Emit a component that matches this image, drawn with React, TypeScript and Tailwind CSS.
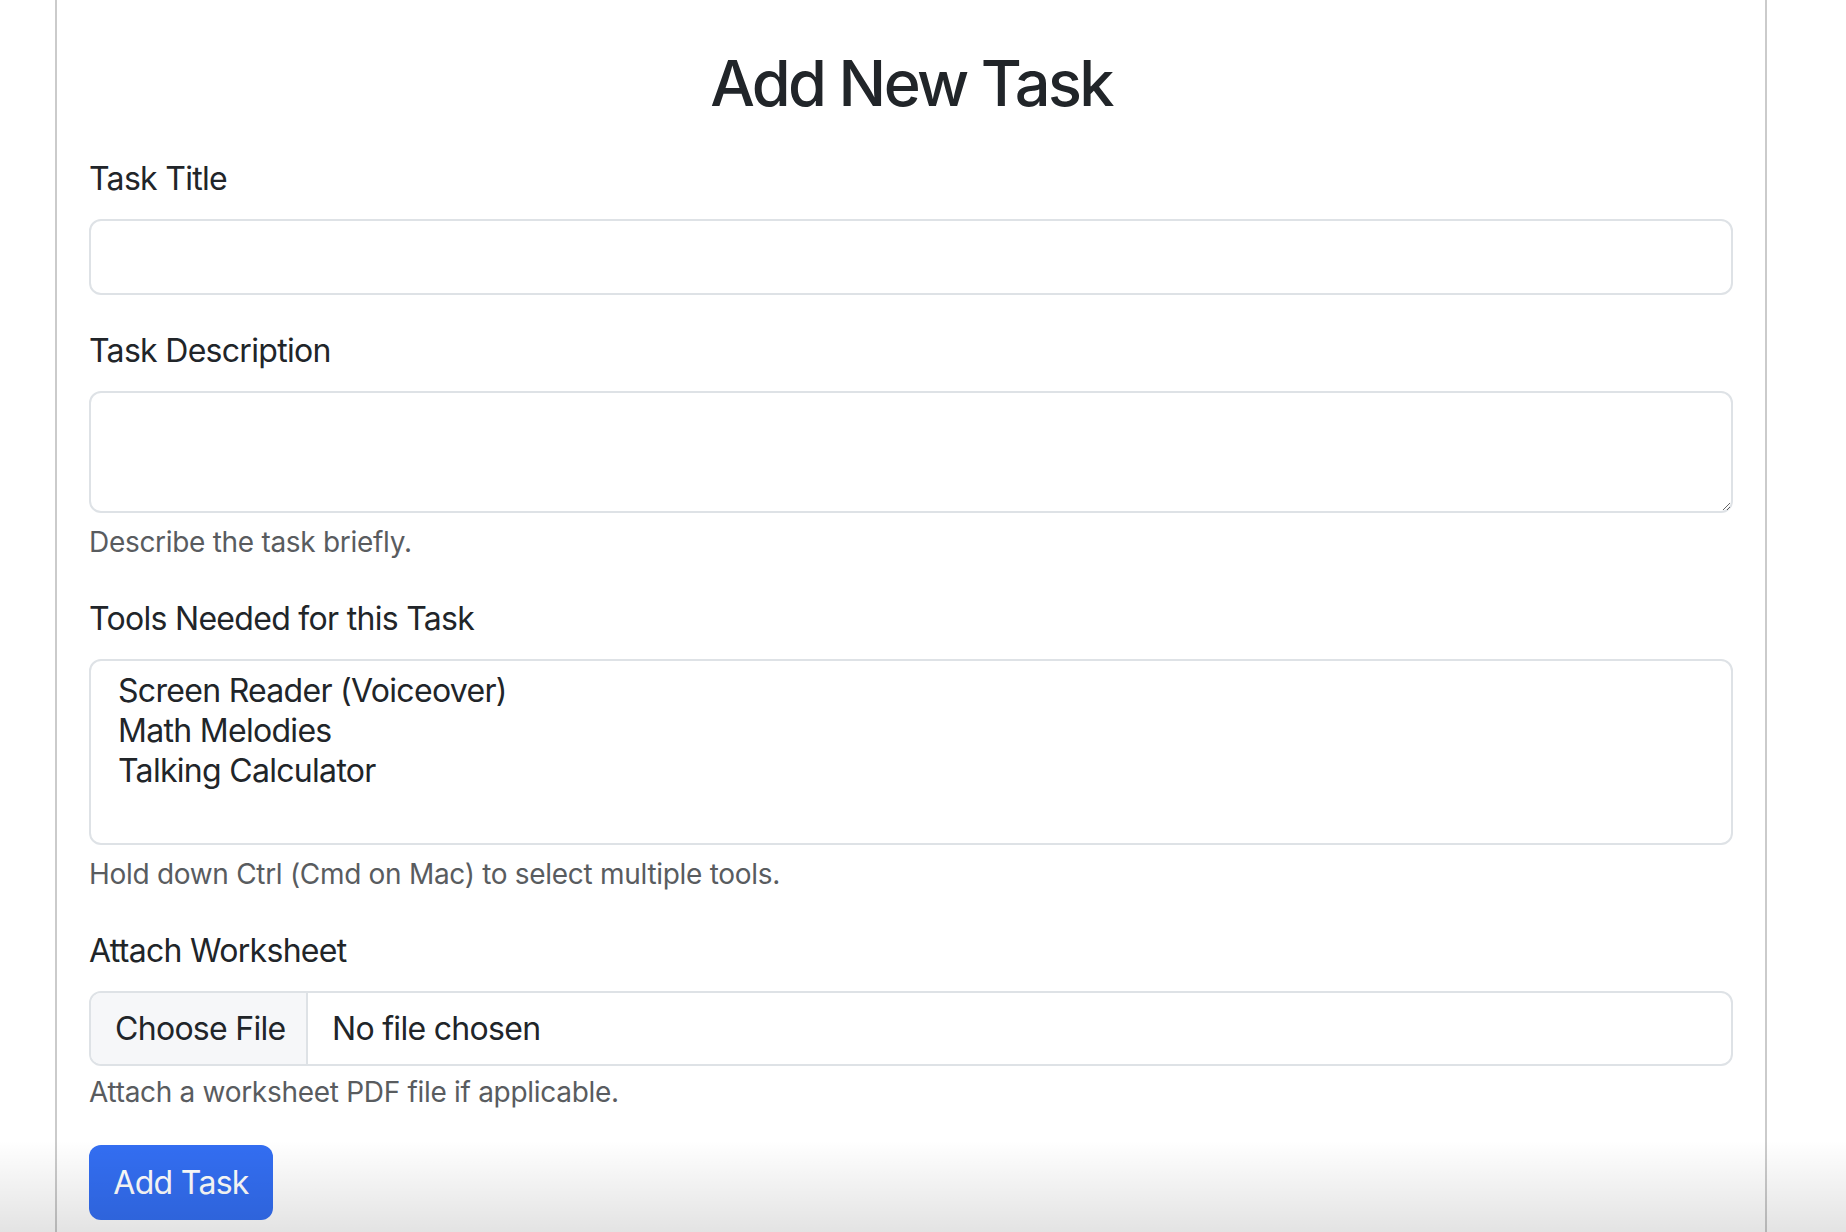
const tools = ['Screen Reader (Voiceover)', 'Math Melodies', 'Talking Calculator'];

const Label = ({children}: {children: string}) => (
    <label className="block text-[32px] leading-[48px] tracking-[-0.7px] text-[#212529] mb-[16px]">{children}</label>
);

const Help = ({children, className = 'mt-[8px]'}: {children: string, className?: string}) => (
    <p className={`${className} text-[28px] leading-[42px] tracking-[-0.3px] text-[#595c5f]`}>{children}</p>
);

const App = () => {
    return (
        <div className="relative h-screen overflow-hidden bg-white font-['Inter','Noto_Sans',sans-serif]">
            <div className="ml-[55px] w-[1712px] h-full border-x-2 border-[#cbcbcb] px-[32px]">
                <h1 className="pt-[40px] mb-[29px] text-center text-[63px] leading-[86px] font-medium text-[#212529] tracking-[-2.6px]">
                    Add New Task
                </h1>

                <form>
                    <div className="mb-[32px]">
                        <Label>Task Title</Label>
                        <input type="text"
                               className="block w-full h-[76px] rounded-[12px] border-2 border-[#dee2e6] bg-white px-[24px] text-[32px] outline-none"/>
                    </div>

                    <div className="mb-[32px]">
                        <Label>Task Description</Label>
                        <textarea rows={2}
                                  className="block w-full h-[122px] rounded-[12px] border-2 border-[#dee2e6] bg-white px-[24px] py-[12px] text-[32px] outline-none"/>
                        <Help>Describe the task briefly.</Help>
                    </div>

                    <div className="mb-[32px]">
                        <Label>Tools Needed for this Task</Label>
                        <div className="h-[186px] rounded-[12px] border-2 border-[#dee2e6] bg-white pt-[10px] pl-[27px]">
                            {tools.map((tool) => (
                                <div key={tool} className="text-[32px] leading-[40px] tracking-[-0.7px] text-[#212529]">{tool}</div>
                            ))}
                        </div>
                        <Help>Hold down Ctrl (Cmd on Mac) to select multiple tools.</Help>
                    </div>

                    <div className="mb-[32px]">
                        <Label>Attach Worksheet</Label>
                        <div className="flex h-[75px] rounded-[12px] border-2 border-[#dee2e6] bg-white overflow-hidden text-[32px] tracking-[-0.7px] text-[#212529]">
                            <span className="flex items-center w-[217px] bg-[#f6f7f9] border-r-2 border-[#dee2e6] pl-[24px]">
                                Choose File
                            </span>
                            <span className="flex items-center pl-[24px]">No file chosen</span>
                        </div>
                        <Help className="mt-[5px]">Attach a worksheet PDF file if applicable.</Help>
                    </div>

                    <button type="button"
                            className="flex items-center justify-center w-[184px] h-[75px] rounded-[12px] bg-[#336ef2] text-[32px] tracking-[-0.7px] text-white">
                        Add Task
                    </button>
                </form>
            </div>

            <div className="pointer-events-none absolute inset-x-0 bottom-0 h-[92px] bg-linear-to-b from-black/0 to-black/[0.11]"/>
        </div>
    );
};

export default App;
